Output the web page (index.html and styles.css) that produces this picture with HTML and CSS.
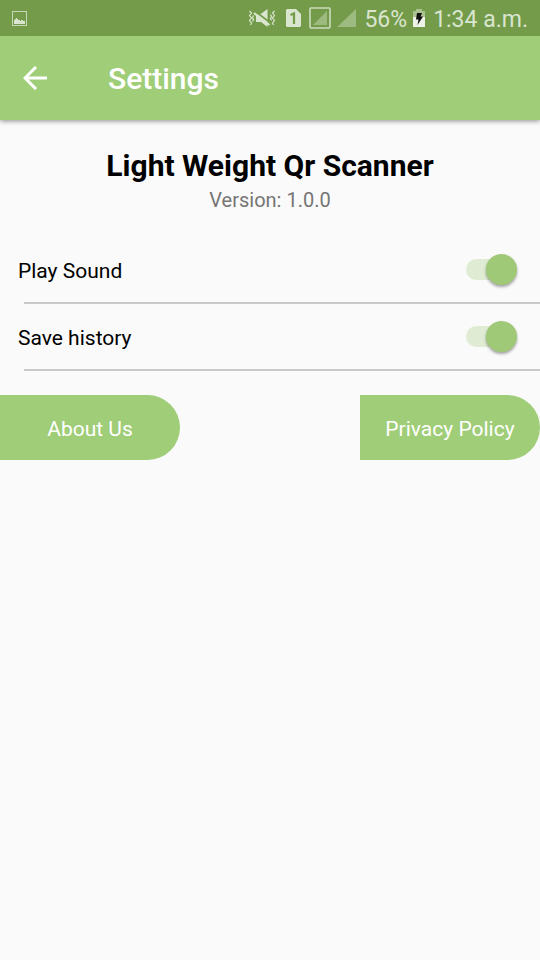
FILE: index.html
```html
<!DOCTYPE html>
<html lang="en">
<head>
<meta charset="utf-8">
<meta name="viewport" content="width=device-width, initial-scale=1">
<title>Settings</title>
<link rel="stylesheet" href="styles.css">
</head>
<body>
<div class="status">
  <svg width="15" height="15" viewBox="0 0 15 15" aria-hidden="true">
    <rect x=".5" y=".5" width="14" height="14" fill="none" stroke="#c6d6b6"/>
    <path d="M2 13V9h1V8h1V7h1v1h1v1h2v1h1V9h2v1h2v3z" fill="#dae5d0"/>
  </svg>
  <div class="indicators">
    <div class="modes">
      <svg width="28" height="18" viewBox="0 0 28 18" aria-hidden="true">
        <path d="M1.500 2l2 2-2 2.500 2 2.500-2 2.500 2 2.500-1 2M5.500 6.500L4.500 8.500l1 2-1 2M26.500 2l-2 2 2 2.500-2 2.500 2 2.500-2 2.500 1 2M22.500 5.500l1 2-1 2 1 2" fill="none" stroke="#dae5d0" stroke-width="1.200"/>
        <path d="M12 5.500L19.500 0v18L13 13H8V5.500z" fill="#dae5d0"/>
        <path d="M8 3L22 13.500" stroke="#739b4a" stroke-width="1.600"/>
        <path d="M6 4L21.500 16" stroke="#dae5d0" stroke-width="2.200"/>
      </svg>
      <svg width="15" height="18" viewBox="0 0 15 18" aria-hidden="true">
        <path d="M1 0h9l5 5v12l-1 1H1l-1-1V1z" fill="#dae5d0"/>
        <path d="M4.500 6L8 4.500V15" fill="none" stroke="#739b4a" stroke-width="2.200"/>
      </svg>
    </div>
    <div class="pair">
      <svg width="22" height="22" viewBox="0 0 22 22" aria-hidden="true">
        <rect x="1" y="1" width="20" height="20" rx="1" fill="none" stroke="#cddcbd" stroke-width="1.600"/>
        <path d="M4 18L18 4v14z" fill="#9dba80"/>
      </svg>
      <svg width="19" height="18" viewBox="0 0 19 18" aria-hidden="true">
        <path d="M0 18L19 0v18z" fill="#9dba80"/>
      </svg>
    </div>
    <div class="pair">
      <span>56%</span>
      <svg width="12" height="18" viewBox="0 0 12 18" aria-hidden="true">
        <path d="M0 2h3V0h6v2h3v7H0z" fill="#a9c28f"/>
        <path d="M0 8h12v10H0z" fill="#edf3e8"/>
        <path d="M4 4h5L7.500 7.500H10L4.500 16l1-5.500H3z" fill="#101010"/>
      </svg>
    </div>
    <span>1:34 a.m.</span>
  </div>
</div>
<header class="appbar">
  <button class="back" type="button" aria-label="Back">
    <svg width="24" height="24" viewBox="0 0 24 24" aria-hidden="true">
      <path d="M24 12H2M13 1L2 12l11 11" fill="none" stroke="#fff" stroke-width="3"/>
    </svg>
  </button>
  <h1>Settings</h1>
</header>
<main>
  <section class="about">
    <h2>Light Weight Qr Scanner</h2>
    <p>Version: 1.0.0</p>
  </section>
  <div class="row">
    <label for="sound">Play Sound</label>
    <input class="switch" id="sound" type="checkbox" role="switch" checked>
  </div>
  <hr>
  <div class="row">
    <label for="history">Save history</label>
    <input class="switch" id="history" type="checkbox" role="switch" checked>
  </div>
  <hr>
  <div class="actions">
    <button type="button">About Us</button>
    <button type="button">Privacy Policy</button>
  </div>
</main>
</body>
</html>
```
FILE: styles.css
```css
* {
  box-sizing: border-box;
}

body {
  margin: 0;
  min-height: 100vh;
  background: #fafafa;
  color: #000;
  font-family: Roboto, "Liberation Sans", sans-serif;
}

svg {
  display: block;
  flex: none;
}

h1, h2, p {
  margin: 0;
}

.status {
  position: relative;
  z-index: 1;
  display: flex;
  align-items: center;
  justify-content: space-between;
  height: 36px;
  padding: 0 12px;
  background: #739b4a;
  color: #dae5d0;
  font-size: 23px;
  line-height: 32px;
}

.indicators,
.modes,
.pair {
  display: flex;
  align-items: center;
}

.indicators {
  gap: 8px;
}

.modes {
  gap: 10px;
}

.pair {
  gap: 6px;
}

.indicators span {
  padding-top: 4px;
}

.appbar {
  display: flex;
  align-items: center;
  gap: 61px;
  height: 84px;
  padding: 0 23px;
  background: #a0cd78;
  color: #fff;
  box-shadow: 0 1px 5px rgba(0, 0, 0, .45);
}

.back {
  padding: 0;
  border: 0;
  background: none;
}

h1 {
  padding-top: 2px;
  font-size: 30px;
  font-weight: 500;
  line-height: 36px;
}

.about {
  padding: 28px 16px 21px;
  text-align: center;
}

h2 {
  font-size: 30px;
  font-weight: 700;
  line-height: 36px;
}

.about p {
  color: #757575;
  font-size: 20px;
  line-height: 32px;
}

.row {
  display: flex;
  align-items: center;
  justify-content: space-between;
  height: 65px;
  padding: 0 23px 0 18px;
  font-size: 21px;
}

.row label {
  padding-top: 2px;
}

.switch {
  position: relative;
  appearance: none;
  width: 51px;
  height: 31px;
  margin: 0;
}

.switch::before {
  content: "";
  position: absolute;
  inset: 5px 6px 5px 0;
  border-radius: 11px;
  background: #dfecd3;
}

.switch::after {
  content: "";
  position: absolute;
  top: 0;
  right: 0;
  width: 31px;
  height: 31px;
  border-radius: 50%;
  background: #9fc977;
  box-shadow: 0 2px 3px rgba(0, 0, 0, .35);
}

.switch:not(:checked)::after {
  right: 20px;
}

hr {
  height: 2px;
  margin: 0 0 0 24px;
  border: 0;
  background: #c8c8c8;
}

.actions {
  display: flex;
  justify-content: space-between;
  padding-top: 24px;
}

.actions button {
  width: 33.333%;
  height: 65px;
  padding: 2px 0 0;
  border: 0;
  border-radius: 0 33px 33px 0;
  background: #a0cd78;
  color: #fff;
  font: inherit;
  font-size: 21px;
}
```
